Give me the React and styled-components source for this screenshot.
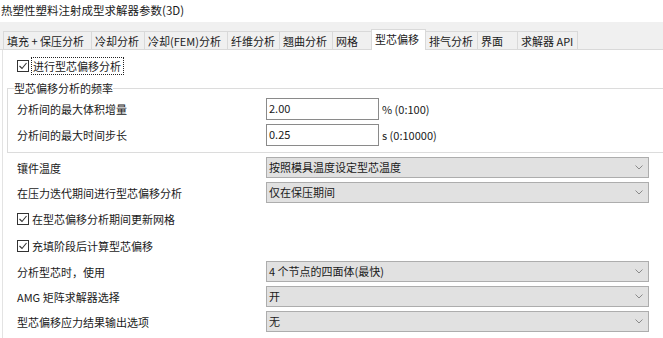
import React from "react";
import styled, { createGlobalStyle } from "styled-components";

const GlobalStyle = createGlobalStyle`
  html, body { margin: 0; padding: 0; background: #fff; }
  body {
    font-family: "Noto Sans CJK SC", "Noto Sans", sans-serif;
    font-size: 11px;
    color: #1a1a1a;
  }
  * { box-sizing: border-box; }
`;

const Page = styled.div`
  width: 663px;
  height: 338px;
  overflow: hidden;
  background: #fff;
`;

const Title = styled.div`
  height: 22px;
  line-height: 20px;
  padding-left: 1px;
  font-size: 11.5px;
  white-space: nowrap;
`;

const TabStrip = styled.div`
  height: 28px;
  background: #f0f0f0;
  border-bottom: 1px solid #d9d9d9;
  display: flex;
  align-items: flex-end;
  padding-left: 3px;
`;

const Tab = styled.div`
  width: ${(p) => p.$w}px;
  height: ${(p) => (p.$active ? 21 : 18)}px;
  margin-left: -1px;
  margin-bottom: ${(p) => (p.$active ? -1 : 0)}px;
  &:first-child { margin-left: 0; }
  border: 1px solid #d9d9d9;
  border-bottom: none;
  background: ${(p) => (p.$active ? "#fff" : "#f0f0f0")};
  position: relative;
  z-index: ${(p) => (p.$active ? 2 : 1)};
  display: flex;
  align-items: center;
  padding-left: 3px;
  padding-bottom: ${(p) => (p.$active ? 2 : 0)}px;
  white-space: nowrap;
  line-height: 14px;
`;

const Panel = styled.div`
  margin-left: 2px;
  border-left: 1px solid #e3e3e3;
  height: 288px;
  padding-top: 7px;
  display: flex;
  flex-direction: column;
`;

const TopCheckRow = styled.div`
  height: 18px;
  display: flex;
  align-items: center;
  padding-left: 14px;
`;

const Box = styled.span`
  width: 12px;
  height: 12px;
  border: 1px solid #333;
  background: #fff;
  display: inline-flex;
  align-items: center;
  justify-content: center;
  flex: none;
`;

const FocusLabel = styled.span`
  margin-left: 2px;
  height: 18px;
  line-height: 16px;
  padding: 0 2px 0 1px;
  border: 1px dotted #222;
  white-space: nowrap;
`;

const Group = styled.fieldset`
  margin: 6px 0 0 4px;
  padding: 3px 0 6px 6px;
  border: 1px solid #dcdcdc;
  border-right: none;
  min-width: 0;
`;

const Legend = styled.legend`
  padding: 0;
  line-height: 14px;
  height: 14px;
  white-space: nowrap;
`;

const GroupRows = styled.div`
  display: flex;
  flex-direction: column;
  gap: 4px;
`;

const FieldRow = styled.div`
  display: grid;
  grid-template-columns: 249px auto 1fr;
  align-items: center;
  height: ${(p) => p.$h || 25}px;
  padding-left: ${(p) => p.$pl || 14}px;
  white-space: nowrap;
`;

const TextInput = styled.div`
  width: 113px;
  height: 22px;
  border: 1px solid #8a8a8a;
  background: #fff;
  padding-left: 2px;
  line-height: 19px;
`;

const Unit = styled.span`
  margin-left: 3px;
`;

const Select = styled.div`
  width: 383px;
  height: 21px;
  background: #e1e1e1;
  border: 1px solid #adadad;
  display: flex;
  align-items: center;
  justify-content: space-between;
  padding: 0 5px 0 2px;
  line-height: 19px;
`;

const SelectsTop = styled.div`
  margin-top: 2px;
`;

const CheckRow = styled.div`
  height: 27px;
  display: flex;
  align-items: center;
  gap: 3px;
  padding-left: 14px;
  white-space: nowrap;
`;

const CheckMark = () => (
  <svg width="10" height="10" viewBox="0 0 10 10">
    <polyline points="1.5,5 4,7.5 8.5,2" fill="none" stroke="#333" strokeWidth="1.1" />
  </svg>
);

const Checkbox = () => (
  <Box>
    <CheckMark />
  </Box>
);

const Chevron = () => (
  <svg width="8" height="5" viewBox="0 0 8 5">
    <polyline points="0.5,0.5 4,4 7.5,0.5" fill="none" stroke="#8a8a8a" strokeWidth="1" />
  </svg>
);

const Dropdown = ({ value }) => (
  <Select>
    <span>{value}</span>
    <Chevron />
  </Select>
);

const tabs = [
  { label: "填充 + 保压分析", w: 89 },
  { label: "冷却分析", w: 54 },
  { label: "冷却(FEM)分析", w: 84 },
  { label: "纤维分析", w: 53 },
  { label: "翘曲分析", w: 54 },
  { label: "网格", w: 40 },
  { label: "型芯偏移", w: 55, active: true },
  { label: "排气分析", w: 53 },
  { label: "界面", w: 41 },
  { label: "求解器 API", w: 61 },
];

export default function App() {
  return (
    <Page>
      <GlobalStyle />
      <Title>热塑性塑料注射成型求解器参数(3D)</Title>
      <TabStrip>
        {tabs.map((t) => (
          <Tab key={t.label} $w={t.w} $active={t.active}>
            {t.label}
          </Tab>
        ))}
      </TabStrip>
      <Panel>
        <TopCheckRow>
          <Checkbox />
          <FocusLabel>进行型芯偏移分析</FocusLabel>
        </TopCheckRow>
        <Group>
          <Legend>型芯偏移分析的频率</Legend>
          <GroupRows>
            <FieldRow $h={22} $pl={3}>
              <span>分析间的最大体积增量</span>
              <TextInput>2.00</TextInput>
              <Unit>% (0:100)</Unit>
            </FieldRow>
            <FieldRow $h={22} $pl={3}>
              <span>分析间的最大时间步长</span>
              <TextInput>0.25</TextInput>
              <Unit>s (0:10000)</Unit>
            </FieldRow>
          </GroupRows>
        </Group>
        <SelectsTop>
          <FieldRow>
            <span>镶件温度</span>
            <Dropdown value="按照模具温度设定型芯温度" />
          </FieldRow>
          <FieldRow>
            <span>在压力迭代期间进行型芯偏移分析</span>
            <Dropdown value="仅在保压期间" />
          </FieldRow>
        </SelectsTop>
        <CheckRow>
          <Checkbox />
          <span>在型芯偏移分析期间更新网格</span>
        </CheckRow>
        <CheckRow>
          <Checkbox />
          <span>充填阶段后计算型芯偏移</span>
        </CheckRow>
        <FieldRow>
          <span>分析型芯时，使用</span>
          <Dropdown value="4 个节点的四面体(最快)" />
        </FieldRow>
        <FieldRow>
          <span>AMG 矩阵求解器选择</span>
          <Dropdown value="开" />
        </FieldRow>
        <FieldRow>
          <span>型芯偏移应力结果输出选项</span>
          <Dropdown value="无" />
        </FieldRow>
      </Panel>
    </Page>
  );
}
